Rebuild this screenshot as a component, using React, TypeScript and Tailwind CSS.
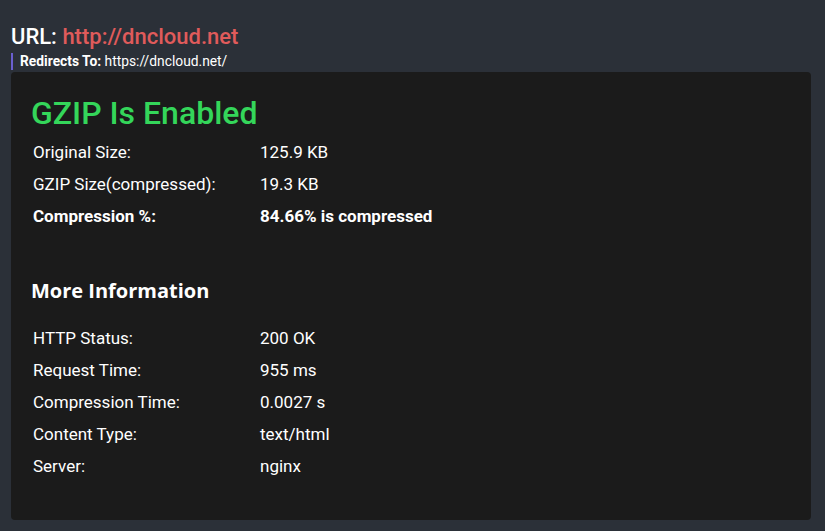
import React from 'react';

const summary = [
  { label: 'Original Size:', value: '125.9 KB' },
  { label: 'GZIP Size(compressed):', value: '19.3 KB' },
  { label: 'Compression %:', value: '84.66% is compressed', bold: true },
];

const info = [
  { label: 'HTTP Status:', value: '200 OK' },
  { label: 'Request Time:', value: '955 ms' },
  { label: 'Compression Time:', value: '0.0027 s' },
  { label: 'Content Type:', value: 'text/html' },
  { label: 'Server:', value: 'nginx' },
];

type Row = { label: string; value: string; bold?: boolean };

const InfoTable: React.FC<{ rows: Row[] }> = ({ rows }) => (
  <div className="flex flex-col">
    {rows.map((r) => (
      <div
        key={r.label}
        className={`flex h-[32px] items-center text-[17px] text-white ${r.bold ? 'font-bold' : ''}`}
      >
        <div className="w-[229px] pl-[2px]">{r.label}</div>
        <div>{r.value}</div>
      </div>
    ))}
  </div>
);

export default function App() {
  return (
    <div
      className="min-h-screen bg-[#2b3038] px-[11px] pt-[24px] pb-[12px]"
      style={{ fontFamily: 'Roboto, "Liberation Sans", sans-serif' }}
    >
      <h1 className="text-[22px] font-medium leading-[26px] text-white">
        URL: <span className="text-[#e05b5b]">http://dncloud.net</span>
      </h1>
      <div className="mt-[3px] border-l-2 border-[#6a5fcf] pl-[7px] text-[13.8px] leading-[17px] text-white">
        <span className="font-bold">Redirects To:</span> https://dncloud.net/
      </div>
      <div className="mt-[2px] w-[800px] rounded-[4px] bg-[#1b1b1b] px-[20px] pt-[22px] pb-[37px]">
        <h2 className="text-[32px] font-medium leading-[38px] text-[#34d65a]">GZIP Is Enabled</h2>
        <div className="mt-[5px]">
          <InfoTable rows={summary} />
        </div>
        <h3
          className="mt-[44px] text-[20px] font-bold leading-[28px] text-white"
          style={{ fontFamily: '"Open Sans", sans-serif' }}
        >
          More Information
        </h3>
        <div className="mt-[18px]">
          <InfoTable rows={info} />
        </div>
      </div>
    </div>
  );
}
